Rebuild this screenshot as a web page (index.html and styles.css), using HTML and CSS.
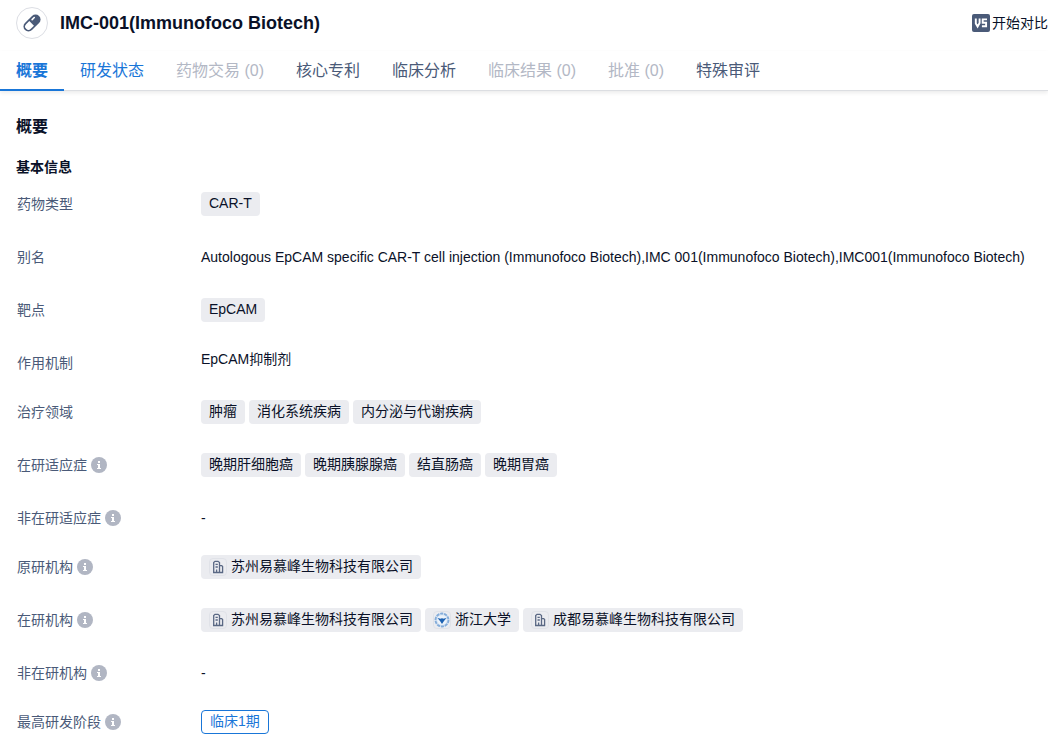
FILE: index.html
```html
<!DOCTYPE html>
<html lang="zh-CN">
<head>
<meta charset="utf-8">
<meta name="viewport" content="width=device-width, initial-scale=1">
<title>IMC-001(Immunofoco Biotech)</title>
<link rel="stylesheet" href="styles.css">
</head>
<body>
<svg class="sprite" aria-hidden="true">
  <symbol id="info" viewBox="0 0 16 16">
    <circle cx="8" cy="8" r="8" fill="#b1b6c3"/>
    <path d="M7 4h2v2H7zM6 7h3v4h1v1H6v-1h1V8H6z" fill="#fff"/>
  </symbol>
  <symbol id="building" viewBox="0 0 16 16">
    <g fill="none" stroke="#5a6884" stroke-width="1.300">
      <path d="M3.700 13.500V3.500L5 2.300H8L9.500 3.500V13.500M9.500 6.600h2.200l.9.900v6M3 13.500h10.200"/>
      <path d="M5.500 5.400H7.800M5.500 8H7.800M6.600 13v-2.600"/>
    </g>
  </symbol>
</svg>

<header class="header">
  <span class="avatar">
    <svg class="avatar-icon" viewBox="0 0 20 20" aria-hidden="true">
      <g transform="rotate(-45 10 10)">
        <rect x="0" y="5" width="20" height="10" rx="5" fill="#4a5a78"/>
        <path d="M9.500 6.700H5a3.300 3.300 0 0 0 0 6.600h4.500z" fill="#fff"/>
        <path d="M12.500 7.700h3" stroke="#fff" stroke-width="1.600" stroke-linecap="round"/>
      </g>
    </svg>
  </span>
  <h1 class="title">IMC-001(Immunofoco Biotech)</h1>
  <button class="compare" type="button">
    <svg class="compare-icon" viewBox="0 0 18 18" aria-hidden="true">
      <rect width="18" height="18" rx="2" fill="#4a5a78"/>
      <path d="M3.800 4.500v5L5.600 12.500 7.600 9V4.500M15 5.400h-4.300v3.300h3.400v3.500h-4.200" fill="none" stroke="#fff" stroke-width="1.900"/>
    </svg>
    <span>开始对比</span>
  </button>
</header>

<nav class="tabs">
  <a class="tab tab-active" href="#overview" aria-current="page">概要</a>
  <a class="tab tab-link" href="#status">研发状态</a>
  <a class="tab tab-disabled" aria-disabled="true">药物交易 (0)</a>
  <a class="tab" href="#patents">核心专利</a>
  <a class="tab" href="#analysis">临床分析</a>
  <a class="tab tab-disabled" aria-disabled="true">临床结果 (0)</a>
  <a class="tab tab-disabled" aria-disabled="true">批准 (0)</a>
  <a class="tab" href="#review">特殊审评</a>
</nav>

<main class="content" id="overview">
  <h2 class="heading">概要</h2>
  <h3 class="subheading">基本信息</h3>
  <dl class="details">
    <div class="row">
      <dt class="label">药物类型</dt>
      <dd class="value"><span class="tag">CAR-T</span></dd>
    </div>
    <div class="row">
      <dt class="label">别名</dt>
      <dd class="value">Autologous EpCAM specific CAR-T cell injection (Immunofoco Biotech),IMC 001(Immunofoco Biotech),IMC001(Immunofoco Biotech)</dd>
    </div>
    <div class="row">
      <dt class="label">靶点</dt>
      <dd class="value"><a class="tag" href="#epcam">EpCAM</a></dd>
    </div>
    <div class="row row-compact">
      <dt class="label">作用机制</dt>
      <dd class="value value-tight">EpCAM抑制剂</dd>
    </div>
    <div class="row">
      <dt class="label">治疗领域</dt>
      <dd class="value"><span class="tag">肿瘤</span><span class="tag">消化系统疾病</span><span class="tag">内分泌与代谢疾病</span></dd>
    </div>
    <div class="row">
      <dt class="label">在研适应症<svg class="info" aria-hidden="true"><use href="#info"/></svg></dt>
      <dd class="value"><a class="tag" href="#d1">晚期肝细胞癌</a><a class="tag" href="#d2">晚期胰腺腺癌</a><a class="tag" href="#d3">结直肠癌</a><a class="tag" href="#d4">晚期胃癌</a></dd>
    </div>
    <div class="row row-compact">
      <dt class="label">非在研适应症<svg class="info" aria-hidden="true"><use href="#info"/></svg></dt>
      <dd class="value">-</dd>
    </div>
    <div class="row">
      <dt class="label">原研机构<svg class="info" aria-hidden="true"><use href="#info"/></svg></dt>
      <dd class="value"><a class="tag" href="#o1"><svg class="org-icon" viewBox="0 0 16 16" aria-hidden="true"><use href="#building"/></svg>苏州易慕峰生物科技有限公司</a></dd>
    </div>
    <div class="row">
      <dt class="label">在研机构<svg class="info" aria-hidden="true"><use href="#info"/></svg></dt>
      <dd class="value">
        <a class="tag" href="#o1"><svg class="org-icon" viewBox="0 0 16 16" aria-hidden="true"><use href="#building"/></svg>苏州易慕峰生物科技有限公司</a>
        <a class="tag" href="#o2"><svg class="org-icon" viewBox="0 0 16 16" aria-hidden="true">
          <circle cx="8" cy="8" r="7.500" fill="#d3e1f2"/>
          <circle cx="8" cy="8" r="6.500" fill="none" stroke="#84acd9" stroke-width="1.800" stroke-dasharray="3 1"/>
          <circle cx="8" cy="8" r="4.800" fill="#edf3fa"/>
          <path d="M3.500 6l3.500.7L8 6l1 .7L12.500 6l-2.500 3-2 3-2-3z" fill="#1d62b3"/>
        </svg>浙江大学</a>
        <a class="tag" href="#o3"><svg class="org-icon" viewBox="0 0 16 16" aria-hidden="true"><use href="#building"/></svg>成都易慕峰生物科技有限公司</a>
      </dd>
    </div>
    <div class="row row-compact">
      <dt class="label">非在研机构<svg class="info" aria-hidden="true"><use href="#info"/></svg></dt>
      <dd class="value">-</dd>
    </div>
    <div class="row">
      <dt class="label">最高研发阶段<svg class="info" aria-hidden="true"><use href="#info"/></svg></dt>
      <dd class="value"><span class="tag tag-outline">临床1期</span></dd>
    </div>
  </dl>
</main>
</body>
</html>
```
FILE: styles.css
```css
* {
  box-sizing: border-box;
}

body {
  margin: 0;
  overflow-x: hidden;
  background: #fff;
  color: #0a1128;
  font: 14px/24px "Liberation Sans", Arial, "Noto Sans CJK SC", sans-serif;
}

h1, h2, h3, dl, dd {
  margin: 0;
}

a {
  color: inherit;
  text-decoration: none;
}

.sprite {
  position: absolute;
  width: 0;
  height: 0;
}

.header {
  display: flex;
  align-items: center;
  padding: 7px 0 0 16px;
}

.avatar {
  display: flex;
  align-items: center;
  justify-content: center;
  width: 32px;
  height: 32px;
  border: 1px solid #dcdee4;
  border-radius: 50%;
}

.avatar-icon {
  width: 20px;
  height: 20px;
}

.title {
  margin-left: 12px;
  font-size: 18px;
  line-height: 24px;
}

.compare {
  display: flex;
  align-items: center;
  gap: 2px;
  margin-left: auto;
  padding: 0;
  border: 0;
  background: none;
  color: inherit;
  font: inherit;
  white-space: nowrap;
}

.compare-icon {
  width: 18px;
  height: 18px;
}

.tabs {
  display: flex;
  margin-top: 12px;
  border-bottom: 1px solid #dcdee2;
  box-shadow: 0 2px 4px rgba(0, 0, 0, 0.08);
  font-size: 16px;
  white-space: nowrap;
}

.tab {
  height: 40px;
  margin-bottom: -1px;
  padding: 0 16px;
  color: #4a5a78;
  line-height: 40px;
}

.tab-active {
  border-bottom: 2px solid #1976d8;
  color: #1976d8;
  font-weight: bold;
}

.tab-link {
  color: #1976d8;
}

.tab-disabled {
  color: #b3b8c5;
}

.content {
  padding: 24px 16px 20px;
}

.heading {
  font-size: 16px;
  line-height: 24px;
}

.subheading {
  margin-top: 16px;
  font-size: 14px;
  line-height: 24px;
}

.details {
  margin-top: 13px;
}

.row {
  display: grid;
  grid-template-columns: 185px 1fr;
  align-items: start;
  padding-bottom: 29px;
}

.row-compact {
  padding-bottom: 25px;
}

.row:last-child {
  padding-bottom: 0;
}

.label {
  display: flex;
  align-items: center;
  gap: 4px;
  padding-left: 1px;
  color: #4a5a78;
}

.info {
  width: 16px;
  height: 16px;
}

.value {
  display: flex;
  flex-wrap: wrap;
  gap: 4px;
}

.value-tight {
  line-height: 16px;
}

.tag {
  display: flex;
  align-items: flex-start;
  gap: 4px;
  height: 24px;
  padding: 0 8px;
  border-radius: 4px;
  background: #ebecf0;
  line-height: 22px;
}

.tag-outline {
  border: 1px solid #1976d8;
  background: #fff;
  color: #1976d8;
  line-height: 20px;
}

.org-icon {
  align-self: center;
  width: 18px;
  height: 18px;
  border: 1px solid #e0e2e8;
  border-radius: 4px;
}
```
